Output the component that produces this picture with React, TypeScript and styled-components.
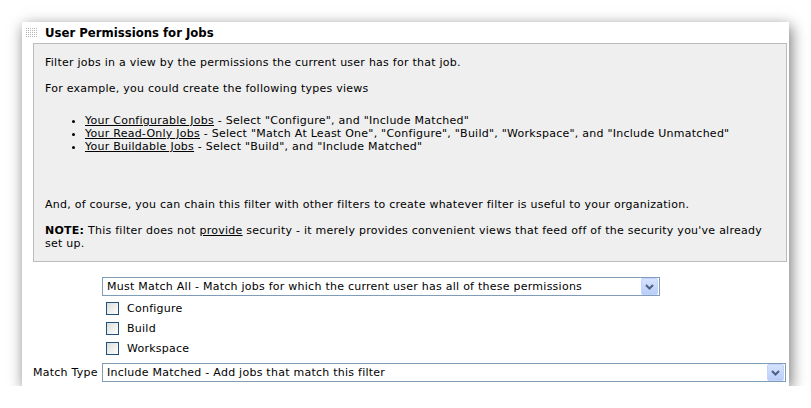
import React from "react";
import styled, { createGlobalStyle } from "styled-components";

const GlobalStyle = createGlobalStyle`
  html, body {
    margin: 0;
    padding: 0;
    background: #ffffff;
  }
  body {
    font-family: "DejaVu Sans", Verdana, sans-serif;
    font-size: 11px;
    letter-spacing: 0.25px;
    color: #000;
  }
`;

const Page = styled.div`
  padding: 22px 0 0 22px;
`;

const Window = styled.div`
  width: 767px;
  height: 364px;
  background: #fff;
  box-shadow: 2px 4px 14px rgba(0, 0, 0, 0.55);
  display: flex;
  flex-direction: column;
`;

const Header = styled.div`
  height: 21px;
  display: flex;
  align-items: center;
  padding-left: 4px;
  gap: 8px;
`;

const Title = styled.span`
  font-family: "DejaVu Sans Condensed", "DejaVu Sans", sans-serif;
  font-size: 13px;
  font-weight: bold;
  letter-spacing: 0;
`;

const HelpBox = styled.div`
  margin: 0 2px 0 11px;
  background: #efefef;
  border: 1px solid #bcbcbc;
  padding: 12px 11px 11px 11px;
  line-height: 13px;
`;

const Para = styled.p<{ $top?: number }>`
  margin: ${(p) => p.$top ?? 13}px 0 0 0;
  &:first-child {
    margin-top: 0;
  }
`;

const List = styled.ul`
  margin: 19px 0 0 0;
  padding-left: 40px;
`;

const Link = styled.span`
  text-decoration: underline;
`;

const Form = styled.div`
  display: grid;
  grid-template-columns: 69px 1fr;
  padding: 15px 3px 0 11px;
  row-gap: 5px;
`;

const Label = styled.div`
  grid-column: 1;
  align-self: center;
  line-height: 13px;
`;

const Field = styled.div`
  grid-column: 2;
  display: flex;
  flex-direction: column;
`;

const SelectBox = styled.div<{ $width?: number }>`
  height: 19px;
  box-sizing: border-box;
  width: ${(p) => (p.$width ? `${p.$width}px` : "100%")};
  border: 1px solid #7f9db9;
  background: #fff;
  display: flex;
  align-items: center;
  padding: 0 1px 0 4px;
`;

const SelectText = styled.span`
  flex: 1;
  white-space: nowrap;
  overflow: hidden;
`;

const ArrowButton = styled.div`
  width: 15px;
  height: 15px;
  border: 1px solid #c3d3fd;
  border-radius: 2px;
  background: linear-gradient(#d6e3fe, #b9cdf8);
  display: flex;
  align-items: center;
  justify-content: center;
`;

const CheckList = styled.div`
  display: flex;
  flex-direction: column;
  padding-top: 2px;
`;

const CheckRow = styled.label`
  display: flex;
  align-items: center;
  height: 20px;
  padding-left: 4px;
  gap: 8px;
`;

const CheckBox = styled.span`
  width: 11px;
  height: 11px;
  border: 1px solid #1c5180;
  background: linear-gradient(135deg, #dcdcd7, #ffffff);
`;

const Grip = () => (
  <svg width="11" height="10" viewBox="0 0 11 10">
    {Array.from({ length: 5 }).flatMap((_, r) =>
      Array.from({ length: 6 }).map((__, c) => (
        <rect key={`${r}-${c}`} x={c * 2} y={r * 2} width="1" height="1" fill="#b5b5b5" />
      ))
    )}
  </svg>
);

const Chevron = () => (
  <svg width="9" height="6" viewBox="0 0 9 6">
    <path d="M1 1 L4.5 4.5 L8 1" stroke="#4d6185" strokeWidth="2" fill="none" />
  </svg>
);

const Select = ({ text, width }: { text: string; width?: number }) => (
  <SelectBox $width={width}>
    <SelectText>{text}</SelectText>
    <ArrowButton>
      <Chevron />
    </ArrowButton>
  </SelectBox>
);

const permissions = ["Configure", "Build", "Workspace"];

export default function App() {
  return (
    <>
      <GlobalStyle />
      <Page>
        <Window>
          <Header>
            <Grip />
            <Title>User Permissions for Jobs</Title>
          </Header>
          <HelpBox>
            <Para>Filter jobs in a view by the permissions the current user has for that job.</Para>
            <Para>For example, you could create the following types views</Para>
            <List>
              <li>
                <Link>Your Configurable Jobs</Link> - Select "Configure", and "Include Matched"
              </li>
              <li>
                <Link>Your Read-Only Jobs</Link> - Select "Match At Least One", "Configure", "Build",
                "Workspace", and "Include Unmatched"
              </li>
              <li>
                <Link>Your Buildable Jobs</Link> - Select "Build", and "Include Matched"
              </li>
            </List>
            <Para $top={45}>
              And, of course, you can chain this filter with other filters to create whatever filter is
              useful to your organization.
            </Para>
            <Para>
              <b>NOTE:</b> This filter does not <Link>provide</Link>
              <span> security - it merely provides convenient views that feed off of the security you've already</span>{" "}
              <span>set up.</span>
            </Para>
          </HelpBox>
          <Form>
            <Field>
              <Select
                width={558}
                text="Must Match All - Match jobs for which the current user has all of these permissions"
              />
              <CheckList>
                {permissions.map((p) => (
                  <CheckRow key={p}>
                    <CheckBox />
                    {p}
                  </CheckRow>
                ))}
              </CheckList>
            </Field>
            <Label>Match Type</Label>
            <Field>
              <Select text="Include Matched - Add jobs that match this filter" />
            </Field>
          </Form>
        </Window>
      </Page>
    </>
  );
}
